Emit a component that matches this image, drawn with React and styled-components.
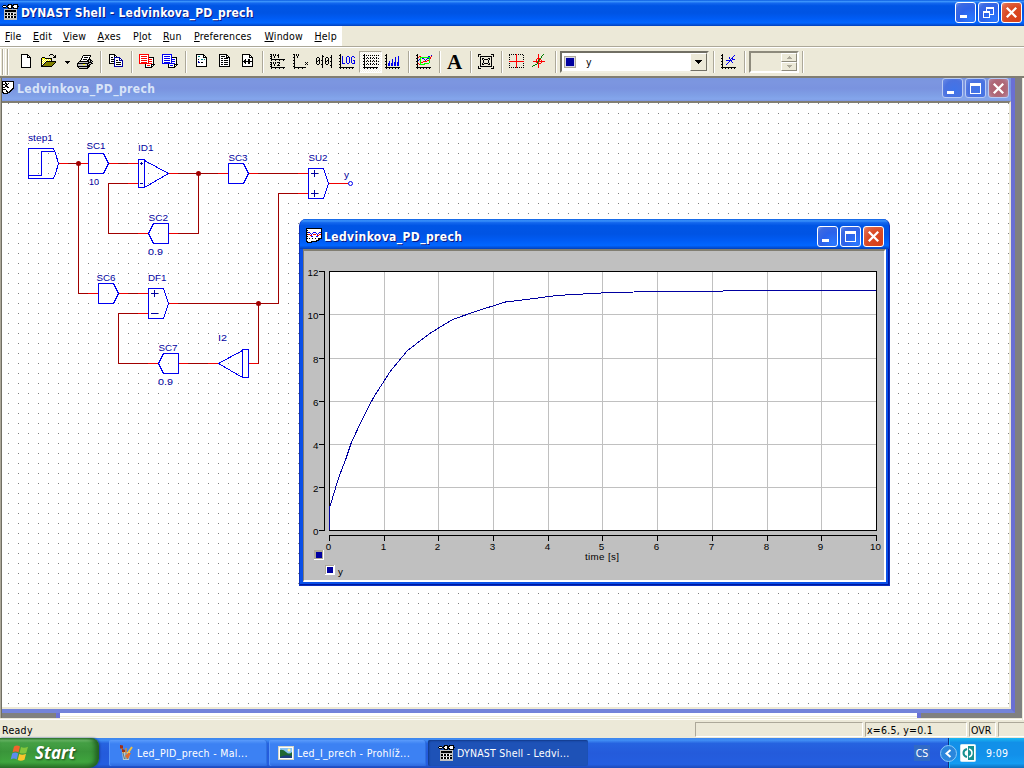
import React from "react";
import styled, { createGlobalStyle, css } from "styled-components";

const GlobalStyle = createGlobalStyle`
  * { box-sizing: border-box; }
  html, body { margin: 0; padding: 0; overflow: hidden; }
  body { font-family: "DejaVu Sans Condensed", "DejaVu Sans", "Liberation Sans", sans-serif; font-size: 10.5px; color: #000; }
  svg { display: block; flex: none; }
`;

const face = "#ece9d8";

const Desktop = styled.div`
  position: relative;
  width: 1024px;
  height: 768px;
  display: flex;
  flex-direction: column;
  background: ${face};
  overflow: hidden;
`;

const activeTitle = "linear-gradient(#0a5be0 0, #3c94fc 6%, #1468ee 12%, #0055e5 22%, #0054e4 50%, #005cf5 72%, #0266ff 88%, #0350d8 95%, #0340b8 100%)";
const inactiveTitle = "linear-gradient(#7b96df 0, #7c96e0 20%, #7a93df 45%, #7f9fe6 75%, #84a6ec 92%, #7f96de 100%)";

const TitleBar = styled.div`
  flex: none;
  display: flex;
  align-items: center;
  height: ${(p) => p.$h}px;
  padding: ${(p) => p.$pad};
  background: ${(p) => (p.$inactive ? inactiveTitle : activeTitle)};
`;

const TitleText = styled.div`
  flex: 1;
  padding-top: 1px;
  font-family: "DejaVu Sans Condensed", "DejaVu Sans", sans-serif;
  font-weight: bold;
  font-size: 12px;
  line-height: 16px;
  white-space: nowrap;
  letter-spacing: ${(p) => p.$ls || 0}px;
  margin-left: ${(p) => p.$ml}px;
  color: ${(p) => (p.$inactive ? "#d8e4f8" : "#fff")};
  text-shadow: ${(p) => (p.$inactive ? "none" : "1px 1px 0 #0a1883")};
`;

const CaptionButtons = styled.div`
  display: flex;
  gap: 2px;
`;

const kinds = {
  blue: "radial-gradient(circle at 80% 85%, #2a78ff 0, #2c62ea 50%, #3c6ae2 80%, #6f95f0 100%)",
  red: "radial-gradient(circle at 80% 85%, #d8401a 0, #da4a24 55%, #e0694a 85%, #f0a088 100%)",
  paleBlue: "radial-gradient(circle at 60% 60%, #3f74ea 0, #4a72e0 60%, #6c8ce6 100%)",
  paleRed: "radial-gradient(circle at 50% 50%, #b4606c 0, #ae6878 60%, #b888a0 100%)",
};

const CaptionButton = styled.div`
  width: 21px;
  height: ${(p) => p.$h || 21}px;
  border: 1px solid ${(p) => (p.$kind.startsWith("pale") ? "#b9cbf4" : "#fff")};
  border-radius: 3px;
  background: ${(p) => kinds[p.$kind]};
`;

const MenuRow = styled.div`
  flex: none;
  display: flex;
  height: 20px;
`;
const MenuStrip = styled.div`
  display: flex;
  align-items: center;
  width: 342px;
  background: #fff;
`;
const MenuItem = styled.div`
  flex: none;
  width: ${(p) => p.$w}px;
  padding-left: 5px;
  line-height: 20px;
  letter-spacing: 0.2px;
  white-space: nowrap;
  u { text-underline-offset: 1px; text-decoration-thickness: 1px; }
`;

const ToolRow = styled.div`
  flex: none;
  display: flex;
  align-items: center;
  height: 30px;
  padding: 2px 0 1px;
  border-top: 1px solid #aca899;
  box-shadow: inset 0 1px 0 #fff;
`;
const Grip = styled.div`
  width: 9px;
  height: 26px;
  margin-right: 6px;
  background: linear-gradient(90deg, #fff 0 1px, ${face} 1px 2px, #aca899 2px 3px, #fff 3px 4px, ${face} 4px 5px, #fff 5px 6px, ${face} 6px 7px, #aca899 7px 8px, #fff 8px 9px);
`;
const ToolButton = styled.div`
  flex: none;
  width: ${(p) => p.$w || 23}px;
  height: 22px;
  padding: 3px 0 0 3px;
  ${(p) =>
    p.$pressed &&
    css`
      padding: 2px 0 0 3px;
      background: repeating-conic-gradient(#fff 0 25%, #f2f0e6 0 50%) 0 0 / 2px 2px;
      border: 1px solid #fff;
      border-top-color: #aca899;
      border-left-color: #aca899;
    `}
`;
const ToolSep = styled.div`
  flex: none;
  width: 2px;
  height: 22px;
  margin: 0 3px;
  background: linear-gradient(90deg, #aca899 50%, #fff 50%);
`;
const Combo = styled.div`
  flex: none;
  display: flex;
  align-items: center;
  width: 149px;
  height: 22px;
  padding: 0 0 0 2px;
  margin-right: 1px;
  background: #fff;
  border: 2px solid #aca899;
  border-left-color: #716f64;
  border-top-color: #716f64;
  border-right-color: #f1efe2;
  border-bottom-color: #f1efe2;
`;
const ComboSwatch = styled.div`
  width: 12px;
  height: 12px;
  border: 1px solid #aca899;
  background: #0000a0;
  box-shadow: inset 0 0 0 1px #d8d8e8;
`;
const ComboText = styled.div`
  flex: 1;
  padding-left: 10px;
`;
const DropButton = styled.div`
  display: flex;
  align-items: center;
  justify-content: center;
  width: 17px;
  height: 18px;
  background: ${face};
  border: 1px solid #fff;
  border-right-color: #716f64;
  border-bottom-color: #716f64;
`;
const SpinBox = styled.div`
  flex: none;
  display: flex;
  justify-content: flex-end;
  width: 50px;
  height: 22px;
  background: ${face};
  border: 2px solid #8d8a7c;
  border-right-color: #fff;
  border-bottom-color: #fff;
`;
const SpinArrows = styled.div`
  display: flex;
  flex-direction: column;
  width: 16px;
`;
const SpinArrow = styled.div`
  display: flex;
  align-items: center;
  justify-content: center;
  flex: 1;
  border: 1px solid #fff;
  border-right-color: #8d8a7c;
  border-bottom-color: #8d8a7c;
`;

const MdiArea = styled.div`
  flex: none;
  height: 644px;
  padding-left: 2px;
  background: linear-gradient(90deg, #aca899 0 1px, #716f64 1px 2px, #808080 2px 1022px, ${face} 1022px 1023px, #fff 1023px);
  border-top: 2px solid #817e72;
`;
const ChildWindow = styled.div`
  width: 1013px;
  height: 635px;
  background: #7b8fdc;
  border-right: 4px solid #6a6fd4;
  border-bottom: 4px solid #7383da;
  box-shadow: inset 0 -1px 0 #5050c0;
`;
const DocCanvas = styled.div`
  width: 1009px;
  height: 608px;
  background: #fff;
  border-top: 2px solid #817e72;
  border-right: 2px solid ${face};
  border-bottom: 2px solid ${face};
`;
const BehindStrip = styled.div`
  display: flex;
  height: 5px;
`;
const BehindWindow = styled.div`
  width: 865px;
  height: 5px;
  margin-left: 54px;
  background: linear-gradient(#fff 0 3px, ${face} 3px 4px, #fff 4px);
  border: solid #6a72d6;
  border-width: 0 4px;
`;
const MdiFoot = styled.div`
  width: 1022px;
  margin-left: -2px;
  height: 2px;
  background: linear-gradient(${face} 50%, #fff 50%);
`;

const StatusBar = styled.div`
  flex: none;
  display: flex;
  height: 18px;
  padding: 2px 0 1px 2px;
  line-height: 15px;
`;
const StatusText = styled.div`
  flex: none;
  width: 693px;
  letter-spacing: 0.3px;
  line-height: 16px;
`;
const StatusPane = styled.div`
  flex: none;
  width: ${(p) => p.$w}px;
  margin-right: ${(p) => p.$mr || 0}px;
  padding-left: 1px;
  line-height: 14px;
  border: 1px solid #fff;
  border-top-color: #aca899;
  border-left-color: #aca899;
  white-space: nowrap;
  letter-spacing: ${(p) => p.$ls || 0}px;
`;

const TaskBar = styled.div`
  flex: none;
  display: flex;
  height: 30px;
  background: linear-gradient(#3c86ee 0, #3f8cf3 8%, #2663e0 18%, #245bdb 50%, #245ee0 88%, #1d49b8 100%);
`;
const StartButton = styled.div`
  display: flex;
  align-items: center;
  width: 99px;
  height: 30px;
  padding: 0 0 1px 10px;
  border-radius: 0 8px 10px 0;
  background: linear-gradient(#2f7f2f 0, #6fbf6c 7%, #45a045 16%, #3a953a 45%, #3fa53e 80%, #2d7a2c 100%);
  box-shadow: inset -4px 0 5px #226022, 1px 0 2px #1a3fa0;
`;
const StartLabel = styled.div`
  margin-left: 6px;
  font-family: "Open Sans", "Liberation Sans", sans-serif;
  font-style: italic;
  font-weight: bold;
  font-size: 17px;
  line-height: 20px;
  color: #fff;
  text-shadow: 1px 1px 2px #1c4a1c;
`;
const TaskButton = styled.div`
  display: flex;
  align-items: center;
  width: ${(p) => p.$w}px;
  height: 26px;
  margin: 2px 0 0 ${(p) => p.$ml}px;
  padding-left: ${(p) => (p.$pressed ? 10 : 9)}px;
  border-radius: 2px;
  color: #fff;
  white-space: nowrap;
  background: ${(p) => (p.$pressed ? "#1e52b7" : "linear-gradient(#5a9bfb 0, #3c81f3 15%, #3c81f3 85%, #2e6be0 100%)")};
  box-shadow: ${(p) => (p.$pressed ? "inset 1px 1px 2px #123a88" : "inset 1px 0 0 #5596fa, inset -1px 0 0 #3070e0")};
`;
const TaskLabel = styled.div`
  margin-left: ${(p) => p.$ml || 3}px;
  letter-spacing: ${(p) => p.$ls || 0}px;
`;
const TaskSpace = styled.div`
  flex: 1;
`;
const Lang = styled.div`
  width: 16px;
  height: 16px;
  margin: 7px 18px 0 0;
  background: #316ac5;
  color: #fff;
  line-height: 16px;
  text-align: center;
`;
const Tray = styled.div`
  position: relative;
  display: flex;
  align-items: center;
  width: 76px;
  padding-left: 11px;
  background: linear-gradient(#19b9f3 0, #1290e8 15%, #1290ea 55%, #149cf2 85%, #0f6fbd 100%);
  border-left: 1px solid #0d2f80;
  box-shadow: inset 1px 0 0 #18bbff;
`;
const TrayChevron = styled.div`
  position: absolute;
  left: -9px;
  top: 7px;
`;
const Clock = styled.div`
  margin-left: 10px;
  color: #fff;
  letter-spacing: 0.3px;
`;

const PlotWindow = styled.div`
  position: absolute;
  left: 299px;
  top: 219px;
  width: 591px;
  height: 367px;
  display: flex;
  flex-direction: column;
  padding: 0 3px 3px;
  border: 1px solid #0a2fc0;
  border-top: 0;
  border-radius: 7px 7px 0 0;
  overflow: hidden;
  background: #0a50e8;
  box-shadow: inset -1px -1px 0 #0018a0;
`;
const PlotTitle = styled(TitleBar)`
  margin: 0 -3px;
`;
const PlotClient = styled.div`
  height: 333px;
  background: #c0c0c0;
  border: 2px solid #817e72;
  border-right-color: #fff;
  border-bottom-color: #fff;
  border-left-width: 1px;
`;

/* One cell per character; a dot is transparent. */
const palette = { k: "#000", w: "#fff", r: "#f00", b: "#0000f0", g: "#808080", y: "#ff0", o: "#808000", l: "#c0c0c0", n: "#0000a0", c: "#008080", G: "#0f0", d: "#008000", R: "#a00000" };

function Pixels({ rows }) {
  const out = [];
  rows.forEach((row, y) => {
    let x = 0;
    while (x < row.length) {
      const ch = row[x];
      let end = x + 1;
      while (end < row.length && row[end] === ch) end += 1;
      if (palette[ch]) out.push(<rect key={`${x}-${y}`} x={x} y={y} width={end - x} height="1" fill={palette[ch]} />);
      x = end;
    }
  });
  return (
    <svg width="17" height="17" viewBox="0 0 17 17" shapeRendering="crispEdges">
      {out}
    </svg>
  );
}

/* Puts a ticked x and y axis round twelve rows of content. */
function axes(content) {
  const rows = [];
  for (let i = 0; i < 13; i += 1) rows.push((i % 3 === 1 ? "kk" : ".k") + (content[i] || ""));
  rows[13] = "kkkkkkkkkkkkkkk";
  rows[14] = ".k..k..k..k..k";
  return rows;
}

function docs(c) {
  const bar = c.repeat(6);
  const gap = `${c}wwwwwwww${c}`;
  const line = `${c}w${bar}w${c}`;
  return [
    c.repeat(10),
    gap,
    line,
    `${gap}kkkkk`,
    `${line}wwwwk`,
    `${gap}${c}${c}${c}wk`,
    `${line}wwwwk`,
    `${gap}${c}${c}${c}wk`,
    `${line}wwwwk`,
    `${c.repeat(13)}wk`,
    "......kwwwwwkkkk",
    `......kw${c}${c}${c}wkwk`,
    "......kwwwwwkk",
    "......kkkkkkk",
  ];
}

const icons = {
  app: [
    "......kkkk.kkkkk",
    ".kkk.kkwwkkkwwwk",
    "kwwwkkwwwkkwwwwkk",
    ".kkk.kkwwkkkwwwk",
    "......kkkk.kkkkk",
    "..lllllllllllll",
    "..lkkkkkkkkkkkl",
    "..lkkkkkkkkkkkl",
    "..lllllllllllll",
    "..lkkwkkwkkwlll",
    "..lkkwkkwkkwkkl",
    "..lllllllllllll",
    "..lkkwkkwkkwkkl",
    "..lkkwkkwkkwkkl",
    "..lllllllllllll",
    "..lllllllllllll",
  ],
  fresh: [
    "...kkkkkkk",
    "...kwwwwwkk",
    "...kwwwwwkwk",
    "...kwwwwwkkkk",
    ...Array(9).fill("...kwwwwwwwwk"),
    "...kkkkkkkkkk",
  ],
  open: [
    ".........kkk",
    "........k...k.k",
    ".............kk",
    ".kkk........kkk",
    "kyyykkkkkkk",
    "kywywywywyk",
    "kwywywywywk",
    "kywywkkkkkkkkkk",
    "kwywkoooooooook",
    "kywkoooooooook",
    "kwkoooooooook",
    "kkoooooooook",
    "kkkkkkkkkkk",
  ],
  print: [
    "",
    "......kkkkkkkk",
    ".....kwwwwwwwk",
    ".....kwkkkkwk",
    "....kwwwwwwwk",
    "....kwkkkkwkkk",
    "...kwwwwwwkklkk",
    "..kkkkkkkkkklklk",
    ".klllllllllkkkk",
    "kkkkkkkkkkkkllkk",
    "klllllyyllklkk",
    "klllllllllkkk",
    "kkkkkkkkkkkkk",
    ".kllllllllkk",
    "..kkkkkkkkk",
  ],
  copy: [
    ".kkkkkk",
    ".kwwwwkk",
    ".kwwwwkwk",
    ".kwkkwnnnnnn",
    ".kwwwwnwwwwnn",
    ".kwkkknwwwwnwn",
    ".kwwwwnwkkwnnnn",
    ".kwkkknwwwwwwwn",
    ".kwwwwnwkkkkkwn",
    ".kkkkknwwwwwwwn",
    "......nwkkkkkwn",
    "......nwwwwwwwn",
    "......nnnnnnnnn",
  ],
  redDocs: docs("r"),
  blueDocs: docs("b"),
  page1: [
    "...kkkkkkkk",
    "...kwwwwwwkk",
    "...kwccwwwkwk",
    "...kwwwwwwkkkk",
    "...kwwwwwwwwwk",
    "...kwkwwccwcwk",
    "...kwwwwwwwwwk",
    "...kwnwwwwwwwk",
    "...kwnnwkkwwwk",
    "...kwwwwwwwwwk",
    "...kwwwwwwwwwk",
    "...kwwwwwwwwwk",
    "...kkkkkkkkkkk",
  ],
  page2: [
    "...kkkkkkkk",
    "...kwwwwwwkk",
    "...kwkkkkwkwk",
    "...kwwwwwwkkkk",
    "...kwkkwkkkkwk",
    "...kwwwwwwwwwk",
    "...kwkkwkkkkwk",
    "...kwwwwwwwwwk",
    "...kwkkwkkkkwk",
    "...kwwwwwwwwwk",
    "...kwkkwkkkkwk",
    "...kwwwwwwwwwk",
    "...kkkkkkkkkkk",
  ],
  page3: [
    "...kkkkkkkk",
    "...kwwwwwwkk",
    "...kwwwwwwkwk",
    "...kwwwwwwkkkk",
    "...kwwwwwwwwwk",
    "...kwwkwwkkwwk",
    "...kwkkwwkkwwk",
    "...kkkkkkkkkkk",
    "...kwkkwwkkwwk",
    "...kwwkwwkkwwk",
    "...kwwwwwwwwwk",
    "...kwwwwwwwwwk",
    "...kkkkkkkkkkk",
  ],
  y1y2: [
    "kk.k.k..k",
    ".k.k.k.kk",
    "kk..k...k",
    ".k..k...k",
    "kk",
    ".kkkkkkkkkkkkkk",
    ".k...k...k...k",
    "",
    "kk.k.k.kkk",
    ".k.k.k...k",
    "kk..k...k",
    ".k..k..kkk",
    "kk",
    ".kkkkkkkkkkkkkk",
    ".k...k...k...k",
  ],
  yx: [
    "kk.k.k",
    ".k.k.k",
    ".k..k",
    "kk..k",
    ".k",
    ".k",
    "kk",
    ".k",
    ".k..........k.k",
    "kk...........k",
    ".k..........k.k",
    ".k",
    "kk",
    ".kkkkkkkkkkkk",
    ".k...k...k..",
  ],
  zero: [
    "",
    "......k........k",
    "......kk.......k",
    ".kk...k...kk..kk",
    "k..k..k..k..k..k",
    "k..k..k..k..k..k",
    "k.kk.kk..k.kk..k",
    "kk.k..k..kk.k.kk",
    "k..k..k..k..k..k",
    "k..k..k..k..k..k",
    ".kk..kk...kk...k",
    "......k.......kk",
    "......k........k",
    "......k........k",
  ],
  log: axes([
    "", "",
    ".b....bb...bb",
    ".b...b..b.b..b",
    ".b...b..b.b",
    ".b...b..b.b",
    ".b...b..b.b.bb",
    ".b...b..b.b..b",
    ".b...b..b.b..b",
    ".bbb..bb...bbb",
  ]),
  grid: axes([
    "", ".k.k.k.k.k.k.k", "", "..k..k..k..k", ".k.k.k.k.k.k.k", "", "..k..k..k..k", ".k.k.k.k.k.k.k", "", "..k..k..k..k", ".k.k.k.k.k.k.k",
  ]),
  bars: axes([
    "", "",
    "...........b",
    "........b..b",
    "........b..b",
    ".....b..b..b",
    ".....b..b..b",
    "..b..b..b..b",
    "..b..b.bb.bb",
    ".bb.bb.bb.bb",
    ".bb.bb.bb.bb",
    ".bb.bb.bb.bb",
  ]),
  multi: axes([
    "",
    ".............b",
    ".rr.......bb.r",
    "r.GGGGGGGGGGr",
    "..G.bb...bbGr",
    ".bG...b.b..G",
    "b.G....b.rrG",
    "..G..rrrr..G",
    "..Grr......G",
    "r.G...GGGGG",
    ".rGGGGG",
  ]),
  fit: [
    "kkk..........kkk",
    "k..............k",
    "k.kkkkkkkkkkkk.k",
    "..k..........k",
    "..k.kk....kk.k",
    "..k.k.kkkk.k.k",
    "..k..k....k..k",
    "..k..k....k..k",
    "..k..k....k..k",
    "..k.k.kkkk.k.k",
    "..k.kk....kk.k",
    "..k..........k",
    "k.kkkkkkkkkkkk.k",
    "k..............k",
    "kkk..........kkk",
  ],
  redGrid: [
    "k.k.k.kr.k.k.k",
    "k......r......k",
    ".......r.......",
    "k......r......k",
    ".......r.......",
    "k......r......k",
    ".......r.......",
    "rrrrrrrrrrrrrrr",
    ".......r.......",
    "k......r......k",
    ".......r.......",
    "k......r......k",
    ".......r.......",
    "k.k.k.krk.k.k.k",
  ],
  cross: [
    "......r....d",
    "......r...d",
    "......r..d",
    "......r..d",
    ".....rrrd",
    "....r.rdr",
    "....r.dr.r",
    ".rrrrrdrrrrrr",
    "....rdr..r",
    ".....drrr",
    "...dd.r",
    ".dd...r",
    "d.....r",
    "......r",
  ],
  pick: axes([
    "",
    "...........b",
    "..........b",
    "......b..b",
    "......b.bb",
    ".......b.bbb",
    "...bbbbbb",
    "......b.b",
    ".....b...b",
    "....b",
    "...b",
  ]),
  plot: [
    "kkkkkkkkkkkkkkkk",
    "kwwwwwwwwwwwwwwk",
    "kkwwwwwwwwwwwwwk",
    "kwwwwwwwwwwwwwwk",
    "kkbbwwwbbbwwwbbk",
    "kwwwbwbwwwbwbwwk",
    "kkrrwbwrrrwbwrrk",
    "kwwwrrwwwwwrrwwk",
    "kkwwwbbwwwbbwwwk",
    "kwwwwwwwwwwwwwwk",
    "kkwkwwkwwkwwkkkk",
    "kwwwwwwwwwwwkk",
    "kwwwwwwwwwkkk",
    "kkwwwkkkkkk",
    ".kkkkk",
  ],
  doc: [
    "kkkkkkkkkkkk",
    "kwwkwwwwwwwk",
    "kwwkkwkwwwwk",
    "kkkwkkwwwwwk",
    "kwwkkwwwwwwk",
    "kwwkkkwwwwwk",
    "kkkwwkkwwwwk",
    "kwwwwwwwwwkk",
    "kkkkwwwwwkk",
    "kwwwkwwwkk",
    "kwwwkkwkk",
    "kkwwwkkk",
    ".kkkkk",
  ],
};

const tools = [
  "fresh", "open", "arrow", "print", "|", "copy", "|", "redDocs", "blueDocs", "|", "page1", "page2", "page3", "|",
  "y1y2", "yx", "zero", "log", "grid", "bars", "|", "multi", "|", "letter", "|", "fit", "|", "redGrid", "cross", "|",
];

function Arrow({ up, color = "#000", w = 7 }) {
  const h = (w + 1) / 2;
  const rows = Array.from({ length: h }, (_, i) => i);
  return (
    <svg width={w} height={h} shapeRendering="crispEdges">
      {rows.map((i) => (
        <rect key={i} x={up ? h - 1 - i : i} y={i} width={up ? 2 * i + 1 : w - 2 * i} height="1" fill={color} />
      ))}
    </svg>
  );
}

const LetterTool = styled.div`
  flex: none;
  width: 23px;
  height: 22px;
  padding-left: 3px;
  font-family: "Liberation Serif", serif;
  font-weight: bold;
  font-size: 21px;
  line-height: 23px;
`;

function Tool({ name }) {
  if (name === "|") return <ToolSep />;
  if (name === "arrow")
    return (
      <ToolButton $w={13}>
        <svg width="8" height="16" shapeRendering="crispEdges">
          <path d="M1 7h5v1h-5zM2 8h3v1h-3zM3 9h1v1h-1z" />
        </svg>
      </ToolButton>
    );
  if (name === "letter") return <LetterTool>A</LetterTool>;
  return (
    <ToolButton $pressed={name === "grid"}>
      <Pixels rows={icons[name]} />
    </ToolButton>
  );
}

function Caption({ pale, middle, h }) {
  const blue = pale ? "paleBlue" : "blue";
  return (
    <CaptionButtons>
      <CaptionButton $kind={blue} $h={h}>
        <svg width="19" height="19"><rect x="4" y="12" width="7" height="3" fill="#fff" /></svg>
      </CaptionButton>
      <CaptionButton $kind={blue} $h={h}>
        <svg width="19" height="19" shapeRendering="crispEdges" fill="none" stroke="#fff">
          {middle === "restore" ? (
            <>
              <path d="M7.500 8V5.500h6.500v6h-3M4.500 9v5.500h6v-5" />
              <path d="M7 5h7.500M4 9h7" strokeWidth="2" />
            </>
          ) : (
            <>
              <rect x="4.500" y="4.500" width="10" height="10" />
              <path d="M4 5.500h11" strokeWidth="3" />
            </>
          )}
        </svg>
      </CaptionButton>
      <CaptionButton $kind={pale ? "paleRed" : "red"} $h={h}>
        <svg width="19" height="19"><path d="M4.800 4.800l9.400 9.400M14.200 4.800l-9.400 9.400" stroke="#fff" strokeWidth="2.300" /></svg>
      </CaptionButton>
    </CaptionButtons>
  );
}

const darkWires =
  "M68 163.500H79M78.500 163V293.500H88M118 163.500H128M128 183.500H108.500V233.500H138M178 173.500H218M198.500 173V233.500H178M258 173.500H298M298 193.500H278.500V303.500H178M128 293.500H138M138 313.500H118.500V363.500H148M188 363.500H208M258.500 303V363.500H258";
const redWires =
  "M58 163.500H68M79 163.500H88M108 163.500H118M128 163.500H138M128 183.500H138M168 173.500H178M218 173.500H228M248 173.500H258M298 173.500H308M298 193.500H308M328 183.500H348M138 233.500H148M168 233.500H178M88 293.500H98M118 293.500H128M138 293.500H148M138 313.500H148M168 303.500H178M148 363.500H158M178 363.500H188M208 363.500H218M248 363.500H258";
const blocks =
  "M28.500 148.500H53.500L55.500 153.500 58.500 163.500 55.500 173.500 53.500 178.500H28.500ZM28 175.500H41.500V151.500H54M88.500 153.500H103.500L108.500 163.500 103.500 173.500H88.500ZM138.500 159.500H144.500V187.500H138.500ZM144.500 160.500L168.500 173.500 144.500 187.500M168.500 223.500H153.500L148.500 233.500 153.500 243.500H168.500ZM228.500 163.500H243.500L248.500 173.500 243.500 183.500H228.500ZM308.500 168.500H323.500L328.500 183.500 323.500 198.500H308.500ZM98.500 283.500H113.500L118.500 293.500 113.500 303.500H98.500ZM148.500 288.500H163.500L168.500 303.500 163.500 318.500H148.500ZM178.500 353.500H163.500L158.500 363.500 163.500 373.500H178.500ZM242.500 349.500H248.500V377.500H242.500ZM242.500 350.500L218.500 363.500 242.500 377.500";
const signs =
  "M140 163.500h3M141.500 162v3M140 183.500h3M311 173.500h7M314.500 170v7M311 193.500h7M314.500 190v7M151 293.500h7M154.500 290v7M151 313.500h7";
const labels = [
  ["step1", 28, 141, 25], ["SC1", 86.5, 149, 19], ["10", 89, 185, 10], ["ID1", 138, 151, 15.5], ["SC2", 148.5, 221, 19.5], ["0.9", 148, 255, 15],
  ["SC3", 228.5, 161, 19], ["SU2", 308.5, 161, 19], ["y", 344, 178, 5], ["SC6", 96.5, 281, 19], ["DF1", 148, 281, 18.5], ["SC7", 158.5, 351, 19],
  ["0.9", 158, 385, 15], ["I2", 218, 341, 9],
];

function Diagram() {
  return (
    <svg width="1007" height="604" viewBox="2 103 1007 604">
      <defs>
        <pattern id="dots" x="8" y="3" width="10" height="10" patternUnits="userSpaceOnUse">
          <rect width="1" height="1" fill="#808080" shapeRendering="crispEdges" />
        </pattern>
      </defs>
      <rect x="2" y="103" width="1007" height="604" fill="url(#dots)" />
      <g fill="none" shapeRendering="crispEdges">
        <path d={darkWires} stroke="#a00000" />
        <path d={redWires} stroke="#f00000" />
        <path d={blocks} stroke="#0000f0" />
        <path d={signs} stroke="#0000a0" />
      </g>
      <circle cx="350.5" cy="183.5" r="2" fill="#fff" stroke="#0000f0" />
      {[[78.5, 163.5], [198.5, 173.5], [258.5, 303.5]].map(([x, y]) => (
        <circle key={x} cx={x} cy={y} r="2.500" fill="#a00000" />
      ))}
      <g fill="#0000a0" fontFamily="Liberation Sans, sans-serif" fontSize="9.800">
        {labels.map(([t, x, y, w]) => (
          <text key={t + x} x={x} y={y} textLength={w} lengthAdjust="spacingAndGlyphs">{t}</text>
        ))}
      </g>
    </svg>
  );
}

const xs = [329, 384, 438, 493, 548, 602, 657, 712, 767, 821, 876];
const ys = [530, 487, 444, 401, 358, 314, 271];
const curve =
  "329.5,508 332.5,498 338.5,478 345.500,460 351.500,442 362.500,419 373.500,397.500 390.500,371 407.500,350.500 430.500,333 452.500,319.500 478.500,310.500 505.500,302 530.500,299 556.500,295.500 610.500,292.500 657.500,291.500 722.500,291.500 723.500,290.500 876,290.500";

function Chart() {
  return (
    <svg width="579" height="330" viewBox="304 251 579 330">
      <rect x="329" y="271" width="548" height="260" fill="#fff" />
      <g shapeRendering="crispEdges" fill="none">
        {xs.slice(1, -1).map((x) => <path key={x} d={`M${x + 0.5} 272V530`} stroke="#c0c0c0" />)}
        {ys.slice(1, -1).map((y) => <path key={y} d={`M330 ${y + 0.5}H876`} stroke="#c0c0c0" />)}
        <rect x="329.5" y="271.5" width="547" height="259" stroke="#000" />
        <path d="M329.500 508V530" stroke="#0000a0" />
        <path d="M324.500 271V531M329 535.500H877" stroke="#000" />
        {ys.map((y) => <path key={y} d={`M319 ${y + 0.5}H324`} stroke="#000" />)}
        {xs.map((x) => <path key={x} d={`M${x + 0.5} 535V541`} stroke="#000" />)}
        <polyline points={curve} stroke="#0000a0" />
      </g>
      <g fontFamily="Liberation Sans, sans-serif" fontSize="9.800">
        {ys.map((y, i) => <text key={y} x="318.500" y={y + 5} textAnchor="end">{i * 2}</text>)}
        {xs.map((x, i) => <text key={x} x={x - 0.5} y="550" textAnchor="middle">{i}</text>)}
        <text x="585" y="560" textLength="34">time [s]</text>
        <text x="338" y="575">y</text>
      </g>
      <g shapeRendering="crispEdges">
        <rect x="314" y="550" width="10" height="10" fill="#fff" />
        <rect x="314" y="550" width="9" height="9" fill="#aca899" />
        <rect x="316" y="552" width="6" height="6" fill="#0000a0" />
        <rect x="325" y="565" width="10" height="10" fill="#fff" />
        <path d="M325.500 574V565.500H334" stroke="#aca899" fill="none" />
        <rect x="327" y="567" width="6" height="6" fill="#0000a0" />
      </g>
    </svg>
  );
}

function Flag() {
  return (
    <svg width="19" height="18" viewBox="0 0 19 18">
      <path d="M4 2.500Q7 .5 10 2.500L8.500 8.500Q5.500 6.700 2.500 8.500Z" fill="#f0642c" />
      <path d="M11 3Q14 4.700 18 2.700L16.300 8.700Q13 10.300 9.500 9Z" fill="#83c63c" />
      <path d="M2.200 9.500Q5.200 7.700 8.200 9.500L6.700 15.500Q3.700 13.700.7 15.500Z" fill="#5c8cee" />
      <path d="M9.200 10Q12.500 11.500 16 9.700L14.500 15.700Q11 17.500 7.700 16Z" fill="#fbc52c" />
    </svg>
  );
}
function PaintIcon() {
  return (
    <svg width="16" height="16" viewBox="0 0 16 16">
      <path d="M4 7h8l-1 8H5z" fill="#b9c9cf" />
      <path d="M5 8l1.500 6M8 8v6M11 8l-1.500 6" stroke="#5a7780" />
      <path d="M5.500 8L3.500 2M8 8V3" stroke="#d98b2c" strokeWidth="1.500" />
      <path d="M2 0l3 .5v3H2zM4 4l3 1v2H4z" fill="#9c2f18" />
      <path d="M10 8l4-6" stroke="#f0c040" strokeWidth="2" />
      <path d="M7 11l3-3 3 0-3 6z" fill="#e26b2a" />
    </svg>
  );
}
function PictureIcon() {
  return (
    <svg width="16" height="16" viewBox="0 0 16 16">
      <rect x=".5" y="1.500" width="15" height="13" fill="#fff" stroke="#d6d6c6" />
      <rect x="2" y="3" width="12" height="10" fill="#86c4f4" />
      <path d="M2 5q3-1 6 2t6 0v6H2z" fill="#1f6832" />
      <path d="M2 12q5-3 12-1v2H2z" fill="#1c3f80" />
      <circle cx="11" cy="5" r="1.500" fill="#fff3a0" />
    </svg>
  );
}

const menus = [
  ["F", "ile", 28], ["E", "dit", 30], ["V", "iew", 34.5], ["A", "xes", 35.5], ["Pl", "ot", 30], ["R", "un", 31], ["P", "references", 70.5], ["W", "indow", 50], ["H", "elp", 32],
];

export default function App() {
  return (
    <Desktop>
      <GlobalStyle />
      <TitleBar $h={26} $pad="0 2px 1px">
        <Pixels rows={icons.app} />
        <TitleText $ml={2} $ls={0.21}>DYNAST Shell - Ledvinkova_PD_prech</TitleText>
        <Caption middle="restore" />
      </TitleBar>
      <MenuRow>
        <MenuStrip>
          {menus.map(([a, b, w]) => (
            <MenuItem key={a + b} $w={w}>
              {a === "Pl" ? <>P<u>l</u></> : <u>{a}</u>}
              {b}
            </MenuItem>
          ))}
        </MenuStrip>
      </MenuRow>
      <ToolRow>
        <Grip />
        {tools.map((t, i) => <Tool key={i} name={t} />)}
        <Combo>
          <ComboSwatch />
          <ComboText>y</ComboText>
          <DropButton><Arrow /></DropButton>
        </Combo>
        <ToolSep />
        <Tool name="pick" />
        <ToolSep />
        <SpinBox>
          <SpinArrows>
            <SpinArrow><Arrow up color="#aca899" w={5} /></SpinArrow>
            <SpinArrow><Arrow color="#aca899" w={5} /></SpinArrow>
          </SpinArrows>
        </SpinBox>
        <ToolSep />
      </ToolRow>
      <MdiArea>
        <ChildWindow>
          <TitleBar $h={23} $pad="0 2px 3px 0" $inactive>
            <Pixels rows={["", ...icons.doc]} />
            <TitleText $ml={-2} $ls={0.38} $inactive>Ledvinkova_PD_prech</TitleText>
            <Caption pale h={20} />
          </TitleBar>
          <DocCanvas>
            <Diagram />
          </DocCanvas>
        </ChildWindow>
        <BehindStrip>
          <BehindWindow />
        </BehindStrip>
        <MdiFoot />
      </MdiArea>
      <StatusBar>
        <StatusText>Ready</StatusText>
        <StatusPane $w={168} $mr={2} />
        <StatusPane $w={102} $mr={2} $ls={0.25}>x=6.5, y=0.1</StatusPane>
        <StatusPane $w={27} $mr={2}>OVR</StatusPane>
        <StatusPane $w={28} />
      </StatusBar>
      <TaskBar>
        <StartButton>
          <Flag />
          <StartLabel>Start</StartLabel>
        </StartButton>
        <TaskButton $w={158} $ml={10}><PaintIcon /><TaskLabel $ls={0.32}>Led_PID_prech - Mal...</TaskLabel></TaskButton>
        <TaskButton $w={157} $ml={2}><PictureIcon /><TaskLabel $ls={0.32}>Led_I_prech - Prohlíž...</TaskLabel></TaskButton>
        <TaskButton $w={160} $ml={2} $pressed><Pixels rows={icons.app} /><TaskLabel $ml={2} $ls={0.22}>DYNAST Shell - Ledvi...</TaskLabel></TaskButton>
        <TaskSpace />
        <Lang>CS</Lang>
        <Tray>
          <TrayChevron>
            <svg width="17" height="17">
              <circle cx="8.500" cy="8.500" r="8" fill="#2a86dc" stroke="#8ccaf8" />
              <path d="M10.500 5l-4 3.500 4 3.500" fill="none" stroke="#fff" strokeWidth="2" />
            </svg>
          </TrayChevron>
          <svg width="16" height="18" viewBox="0 0 16 18">
            <rect x=".5" y=".5" width="15" height="17" rx="1" fill="#fff" stroke="#d0e8f0" />
            <rect x="8" y="2" width="6" height="14" fill="#169090" />
            <path d="M7 5Q3.500 6 3.500 9t3.500 4" fill="none" stroke="#169090" strokeWidth="2" />
            <path d="M9 5q3 1 3 4t-3 4" fill="none" stroke="#fff" strokeWidth="1.500" />
          </svg>
          <Clock>9:09</Clock>
        </Tray>
      </TaskBar>
      <PlotWindow>
        <PlotTitle $h={30} $pad="4px 5px 0 6px">
          <Pixels rows={icons.plot} />
          <TitleText $ml={1} $ls={0.38}>Ledvinkova_PD_prech</TitleText>
          <Caption />
        </PlotTitle>
        <PlotClient>
          <Chart />
        </PlotClient>
      </PlotWindow>
    </Desktop>
  );
}
